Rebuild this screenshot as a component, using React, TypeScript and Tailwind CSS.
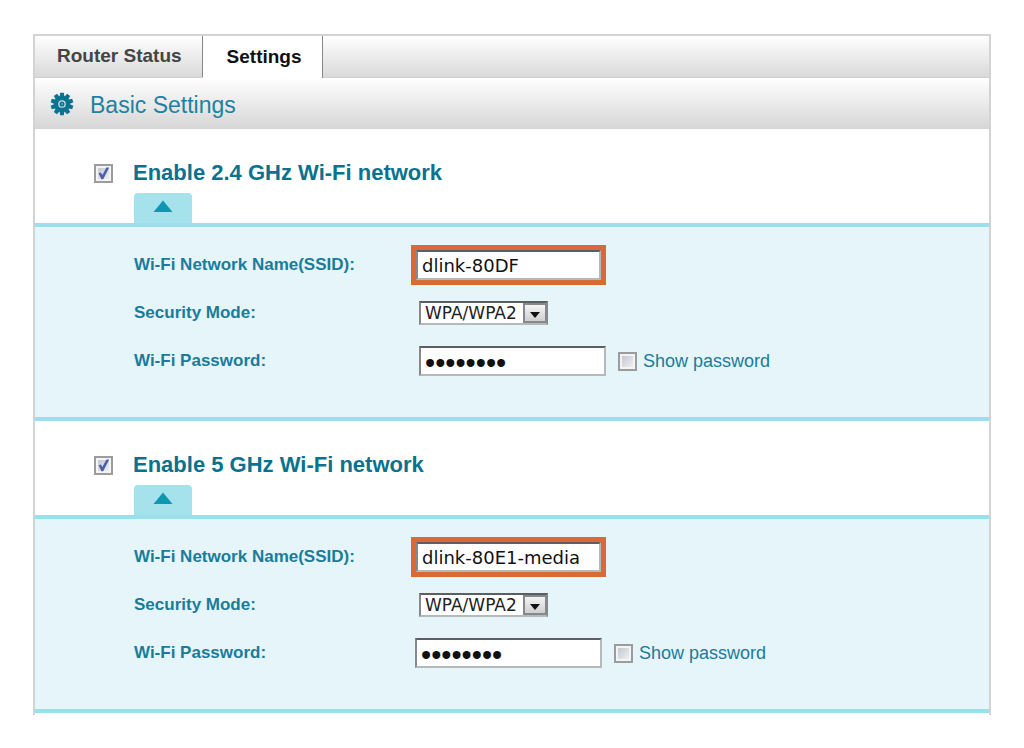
import { useState } from "react"

interface Network {
  id: string
  title: string
  ssid: string
  indent: boolean
}

const networks: Network[] = [
  { id: "wifi24", title: "Enable 2.4 GHz Wi-Fi network", ssid: "dlink-80DF", indent: true },
  { id: "wifi5", title: "Enable 5 GHz Wi-Fi network", ssid: "dlink-80E1-media", indent: false },
]

function GearIcon() {
  const teeth = [0, 36, 72, 108, 144, 180, 216, 252, 288, 324]
  return (
    <svg viewBox="0 0 24 24" className="size-6" aria-hidden="true">
      <g fill="#0b7390">
        {teeth.map((angle) => (
          <path key={angle} d="M9.6 5.5 10.1 0.7h3.8L14.4 5.5z" transform={`rotate(${angle} 12 12)`} />
        ))}
        <circle cx="12" cy="12" r="8.2" />
      </g>
      <circle cx="12" cy="12" r="3.2" fill="#0b7390" stroke="#c5e0e7" strokeWidth="1.3" />
      <circle cx="12" cy="12" r="1" fill="#5fa9bb" />
    </svg>
  )
}

interface CheckboxProps {
  id: string
  checked: boolean
  onChange: (checked: boolean) => void
}

function Checkbox({ id, checked, onChange }: CheckboxProps) {
  return (
    <span className="grid shrink-0">
      <input
        id={id}
        type="checkbox"
        checked={checked}
        onChange={(e) => onChange(e.target.checked)}
        className="col-start-1 row-start-1 size-[19px] appearance-none border-2 border-[#9b9c9d] bg-linear-to-br from-[#bcc1cc] to-[#f6f6f6] shadow-[inset_0_0_0_2px_#f4f4f4]"
      />
      {checked && (
        <svg viewBox="0 0 19 19" className="pointer-events-none col-start-1 row-start-1 size-[19px]" aria-hidden="true">
          <path d="M4.6 9.2 6.8 8.4 8.4 11 12.4 3.6 15.2 3.6 9.2 15.2 7.4 15.2z" fill="#4a5fa5" />
        </svg>
      )}
    </span>
  )
}

function NetworkSection({ id, title, ssid, indent }: Network) {
  const [enabled, setEnabled] = useState(true)
  const [open, setOpen] = useState(true)
  const [name, setName] = useState(ssid)
  const [password, setPassword] = useState("password")
  const [showPassword, setShowPassword] = useState(false)

  const label = "w-[277px] shrink-0 text-[17px] leading-6 font-bold"
  const field =
    "h-[30px] border-2 border-t-[#5b5f61] border-r-[#b4b9bb] border-b-[#b4b9bb] border-l-[#85898b] bg-white pl-1 text-[#111] outline-none"
  const fieldText = "font-['DejaVu_Sans',sans-serif] text-[18px]"
  // the bullets of a masked password need a larger size than plain text
  const maskedText = "pt-1.5 font-['Liberation_Sans',Arial,sans-serif] text-[29px]"

  return (
    <section className="text-[#1a7c99]">
      <div className="flex h-16 items-center gap-5 pt-6 pl-[59px]">
        <Checkbox id={`${id}-enabled`} checked={enabled} onChange={setEnabled} />
        <label htmlFor={`${id}-enabled`} className="text-[22px] leading-7 font-bold text-[#08728f]">
          {title}
        </label>
      </div>
      <button
        type="button"
        aria-label="Toggle details"
        onClick={() => setOpen(!open)}
        className="ml-[99px] flex h-[30px] w-[58px] items-center justify-center rounded-t-sm bg-[#a5e2ec] pb-1"
      >
        <svg viewBox="0 0 20 12" className="h-3 w-5" aria-hidden="true">
          <path d="M10 0.5 19.5 12h-19z" fill="#0f97b1" />
        </svg>
      </button>
      <div className="border-y-4 border-[#9adfec] bg-[#e5f5f9]">
        {open && (
          <div className="pt-3.5 pb-8 pl-[99px]">
            <div className="flex h-12 items-center">
              <label htmlFor={`${id}-ssid`} className={label}>
                Wi-Fi Network Name(SSID):
              </label>
              <span className="flex border-[5px] border-[#da6a35]">
                <input
                  id={`${id}-ssid`}
                  value={name}
                  onChange={(e) => setName(e.target.value)}
                  className={`${field} ${fieldText} w-[185px]`}
                />
              </span>
            </div>
            <div className="flex h-12 items-center">
              <label htmlFor={`${id}-mode`} className={label}>
                Security Mode:
              </label>
              <span className="ml-2 grid items-center">
                <select
                  id={`${id}-mode`}
                  className="col-start-1 row-start-1 h-6 w-[129px] appearance-none border-2 border-t-[#5b5f61] border-r-[#85898b] border-b-[#b4b9bb] border-l-[#85898b] bg-white pl-1 font-['DejaVu_Sans',sans-serif] text-[17px] leading-5 text-[#222]"
                >
                  <option>WPA/WPA2</option>
                </select>
                <span className="pointer-events-none col-start-1 row-start-1 mr-px flex h-5 w-6 items-center justify-center justify-self-end border-2 border-[#85898b] bg-linear-to-b from-[#f4f4f4] to-[#cfcfcf]">
                  <svg viewBox="0 0 10 6" className="mt-1 h-1.5 w-2.5" aria-hidden="true">
                    <path d="M0 0h10L5 6z" fill="#111" />
                  </svg>
                </span>
              </span>
            </div>
            <div className="flex h-12 items-center">
              <label htmlFor={`${id}-password`} className={label}>
                Wi-Fi Password:
              </label>
              <span className={indent ? "ml-2 flex items-center" : "ml-1 flex items-center"}>
                <input
                  id={`${id}-password`}
                  type={showPassword ? "text" : "password"}
                  value={password}
                  onChange={(e) => setPassword(e.target.value)}
                  className={`${field} ${showPassword ? fieldText : maskedText} mr-3 w-[187px]`}
                />
                <Checkbox id={`${id}-show`} checked={showPassword} onChange={setShowPassword} />
                <label htmlFor={`${id}-show`} className="ml-1.5 text-[18px] leading-6">
                  Show password
                </label>
              </span>
            </div>
          </div>
        )}
      </div>
    </section>
  )
}

export default function App() {
  return (
    <main className="mx-[33px] mt-[34px] mb-8 border-2 border-b-0 border-[#d3d3d3] bg-white pb-0.5 font-['Liberation_Sans',Arial,sans-serif]">
      <nav className="flex h-[42px] border-b border-[#d0d0d0] bg-linear-to-b from-white to-[#d9d9d9] text-[19px] font-bold">
        <button type="button" className="border-r border-[#888] pr-5 pl-[22px] text-[#444]">
          Router Status
        </button>
        <button type="button" className="-mb-px border-r border-[#888] bg-white pr-5 pl-6 text-[#111]">
          Settings
        </button>
      </nav>
      <header className="flex h-[51px] items-center gap-4 bg-linear-to-b from-white to-[#d6d6d6] pl-[15px]">
        <GearIcon />
        <h1 className="pt-0.5 text-[23px] leading-7 text-[#1d819f]">Basic Settings</h1>
      </header>
      {networks.map((network) => (
        <NetworkSection key={network.id} {...network} />
      ))}
    </main>
  )
}
